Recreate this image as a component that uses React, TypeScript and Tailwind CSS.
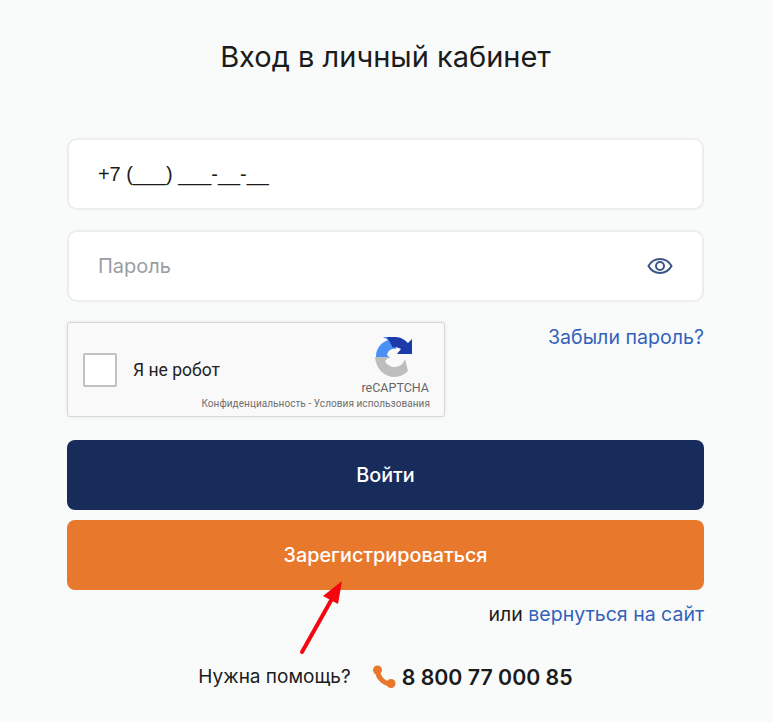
const font = "font-['Inter','Noto_Sans',sans-serif]";

function RecaptchaLogo() {
  return (
    <svg width="40" height="40" viewBox="0 0 40 40" className="block -ml-[2px]">
      <path d="M2 21 L2 19 C2 11 8 5 14 3 L9 0 L20 0 L24 1 L22 12 C18 11 14 13 13 18 L16 21 Z" fill="#4a90f5" />
      <path d="M13 0 L21 0 C27 0 31 3 34 6 L38 2 L38 17 L23 17 L27 12 C25 11 23 10 21 10 L19 11 Z" fill="#1c3aa9" />
      <path d="M1 20 L15 20 L11 24 C13 28 17 30 21 30 L21 40 C10 40 2 32 1 20 Z" fill="#bdbdbd" />
      <path d="M20 30 C25 30 29 28 31 22 L34 34 C31 37 26 40 20 40 Z" fill="#bdbdbd" />
    </svg>
  );
}

function Captcha() {
  return (
    <div className="relative w-[378px] h-[95px] bg-[#f9f9f9] border border-[#d6d6d6] rounded-[3px] shadow-[0_0_4px_rgba(0,0,0,0.08)] flex items-center pl-[15px] font-['Roboto',sans-serif]">
      <div className="w-[34px] h-[34px] bg-white border-2 border-[#c1c1c1] rounded-[2px]" />
      <span className="ml-[16px] mt-[2px] text-[17.5px] text-[#222]">Я не робот</span>
      <div className="absolute right-[15px] top-[14px] flex flex-col items-center">
        <RecaptchaLogo />
        <span className="text-[12.500px] leading-[14px] text-[#666] mt-[4px]">reCAPTCHA</span>
      </div>
      <span className="absolute right-[14px] bottom-[6px] text-[10px] tracking-[0.07px] leading-[12px] text-[#6f6f6f] whitespace-nowrap">
        Конфиденциальность - Условия использования
      </span>
    </div>
  );
}

export default function App() {
  return (
    <div className={`relative w-[773px] h-[722px] overflow-hidden bg-[#f9fbfb] pl-[67px] pr-[69px] ${font}`}>
      <h1 className="h-[138px] pt-[37px] text-center text-[29px] leading-[40px] font-normal text-[#1b1b1b]">
        Вход в личный кабинет
      </h1>

      <div className="flex flex-col gap-[20px]">
        <div className="h-[72px] pt-[1px] bg-white rounded-[10px] border-2 border-[#eceeee] pl-[29px] flex items-center font-['Liberation_Sans',sans-serif] text-[19.900px] text-[#1b1b1b]">
          +7 (___) ___-__-__
        </div>
        <div className="h-[72px] bg-white rounded-[10px] border-2 border-[#eceeee] pl-[29px] pr-[29px] flex items-center justify-between text-[20px] text-[#9a9ea3]">
          <span>Пароль</span>
          <svg width="26" height="18" viewBox="0 0 26 18" fill="none">
            <path d="M1.5 9C4 4.5 8 2 13 2s9 2.5 11.5 7C22 13.500 18 16 13 16S4 13.500 1.500 9Z" stroke="#3a5585" strokeWidth="2" />
            <circle cx="13" cy="9" r="4" stroke="#3a5585" strokeWidth="2" />
          </svg>
        </div>
      </div>

      <div className="mt-[20px] flex justify-between items-start">
        <Captcha />
        <a className="mt-[3px] text-[19.600px] leading-[24px] text-[#3461b9]">Забыли пароль?</a>
      </div>

      <div className="mt-[23px] flex flex-col gap-[10px]">
        <button className="h-[70px] pt-[1px] rounded-[8px] bg-[#182c5c] text-white text-[19.800px] font-medium">Войти</button>
        <button className="h-[70px] pt-[1px] rounded-[8px] bg-[#e8792c] text-white text-[19.800px] font-medium">Зарегистрироваться</button>
      </div>

      <div className="mt-[12px] text-right text-[19.500px] leading-[24px] text-[#1b1b1b]">
        или <a className="text-[#3461b9]">вернуться на сайт</a>
      </div>

      <div className="mt-[37px] flex items-center justify-center">
        <span className="text-[19px] leading-[28px] text-[#1b1b1b]">Нужна помощь?</span>
        <svg className="ml-[21px]" width="24" height="24" viewBox="0 0 24 24" fill="none">
          <path d="M5.500 5C5.500 12 11 18.500 18.500 19" stroke="#e8792c" strokeWidth="5" strokeLinecap="round" />
          <circle cx="5.500" cy="5" r="4.500" fill="#e8792c" />
          <circle cx="19" cy="18.500" r="4.500" fill="#e8792c" />
        </svg>
        <span className="ml-[6px] text-[21.300px] leading-[28px] font-semibold text-[#1b1b1b]">8 800 77 000 85</span>
      </div>

      <svg className="absolute left-[295px] top-[575px]" width="55" height="85" viewBox="0 0 55 85" fill="none">
        <path d="M7 77 L38 22" stroke="#f5050f" strokeWidth="4" strokeLinecap="round" />
        <path d="M47 6 L28 21 L43 29 Z" fill="#f5050f" />
      </svg>
    </div>
  );
}
